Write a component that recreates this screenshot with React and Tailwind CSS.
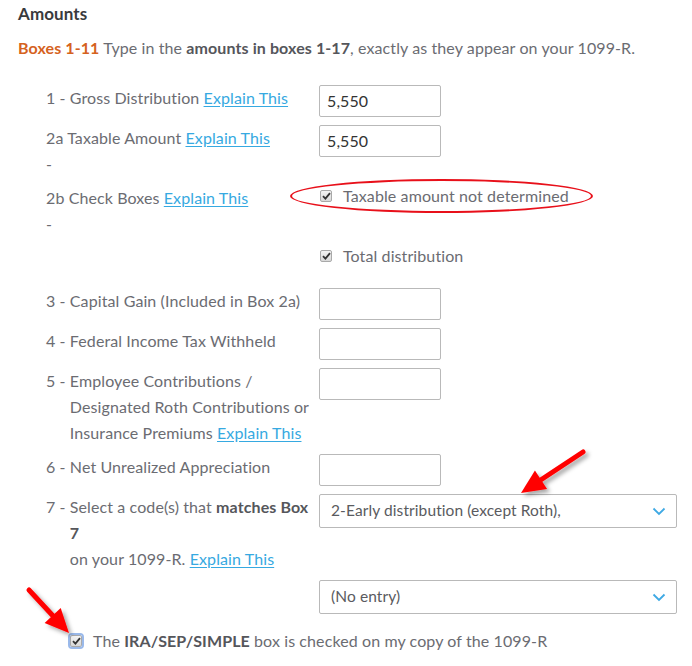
import React from "react";

const font = { fontFamily: "Lato, 'Noto Sans', sans-serif" };

function Link({ children }) {
  return <span className="text-[#36a9e1] underline underline-offset-2">{children}</span>;
}

function Check({ focus }) {
  return (
    <span
      className={
        "inline-flex w-[12px] h-[12px] items-center justify-center rounded-[2px] border border-[#a9a9a9] bg-gradient-to-b from-[#f4f4f4] to-[#d8d8d8] shrink-0 " +
        (focus ? "outline outline-2 outline-[#9ab9ea]" : "")
      }
    >
      <svg width="9" height="8" viewBox="0 0 9 8">
        <path d="M1 4.2 L3.4 6.6 L8 1.2" fill="none" stroke="#333" strokeWidth="1.8" />
      </svg>
    </span>
  );
}

function Input({ value }) {
  return (
    <div className="w-[122px] h-[32px] shrink-0 border border-[#b9b9b9] rounded-[2px] bg-white flex items-center px-[7px] text-[16px] text-[#333]">
      {value}
    </div>
  );
}

function Select({ value }) {
  return (
    <div className="w-[358px] h-[34px] shrink-0 border border-[#b9b9b9] rounded-[2px] bg-white flex items-center justify-between pl-[11px] pr-[10px] text-[15.5px] text-[#5a5b60]">
      <span>{value}</span>
      <svg width="14" height="9" viewBox="0 0 14 9">
        <path d="M1.5 1.5 L7 7 L12.5 1.5" fill="none" stroke="#3ea9e4" strokeWidth="1.8" />
      </svg>
    </div>
  );
}

function Label({ num, children }) {
  return (
    <div className="w-[319px] shrink-0 pl-[46px] flex leading-[26px] whitespace-nowrap">
      <span className="whitespace-pre shrink-0">{num}</span>
      <span>{children}</span>
    </div>
  );
}

function Arrow({ x1, y1, x2, y2 }) {
  const ang = Math.atan2(y2 - y1, x2 - x1);
  const len = 24;
  const w = 11;
  const bx = x2 - len * Math.cos(ang);
  const by = y2 - len * Math.sin(ang);
  const px = -Math.sin(ang) * w;
  const py = Math.cos(ang) * w;
  return (
    <g>
      <line x1={x1} y1={y1} x2={bx} y2={by} stroke="#ff0000" strokeWidth="5" strokeLinecap="round" />
      <polygon points={`${x2},${y2} ${bx + px},${by + py} ${bx - px},${by - py}`} fill="#ff0000" />
    </g>
  );
}

export default function App() {
  return (
    <div
      className="relative w-[692px] h-[666px] bg-white overflow-hidden text-[16px] tracking-[0.1px] text-[#6b6c72]"
      style={font}
    >
      <div className="pl-[18px] pt-[2px]">
        <div className="text-[17px] font-bold text-[#393a3d] leading-[24px]">Amounts</div>
        <div className="mt-[9px] leading-[26px] whitespace-nowrap">
          <span className="text-[#d5621e] font-bold">Boxes 1-11</span> Type in the{" "}
          <span className="font-bold text-[#55565b]">amounts in boxes 1-17</span>, exactly as they appear on your 1099-R.
        </div>
      </div>

      <div className="mt-[24px] flex flex-col">
        <div className="flex">
          <Label num="1 - ">
            Gross Distribution <Link>Explain This</Link>
          </Label>
          <Input value="5,550" />
        </div>

        <div className="flex mt-[8px]">
          <div className="w-[319px] shrink-0 pl-[46px] leading-[26px] whitespace-nowrap">
            <div>
              2a Taxable Amount <Link>Explain This</Link>
            </div>
            <div>-</div>
          </div>
          <Input value="5,550" />
        </div>

        <div className="flex mt-[8px]">
          <div className="w-[319px] shrink-0 pl-[46px] leading-[26px] whitespace-nowrap">
            <div>
              2b Check Boxes <Link>Explain This</Link>
            </div>
            <div>-</div>
          </div>
          <div className="flex flex-col">
            <div className="relative flex items-center gap-[11px] h-[22px] pl-[1px] whitespace-nowrap">
              <Check />
              <span>Taxable amount not determined</span>
              <div className="absolute left-[-29px] top-[-6px] w-[303px] h-[34px] border-2 border-[#e8101a] rounded-[50%]" />
            </div>
            <div className="flex items-center gap-[11px] h-[26px] mt-[36px] pl-[1px]">
              <Check />
              <span>Total distribution</span>
            </div>
          </div>
        </div>

        <div className="flex mt-[19px]">
          <Label num="3 - ">Capital Gain (Included in Box 2a)</Label>
          <Input value="" />
        </div>

        <div className="flex mt-[8px]">
          <Label num="4 - ">Federal Income Tax Withheld</Label>
          <Input value="" />
        </div>

        <div className="flex mt-[8px]">
          <Label num="5 - ">
            Employee Contributions /<br />
            Designated Roth Contributions or
            <br />
            Insurance Premiums <Link>Explain This</Link>
          </Label>
          <Input value="" />
        </div>

        <div className="flex mt-[8px]">
          <Label num="6 - ">Net Unrealized Appreciation</Label>
          <Input value="" />
        </div>

        <div className="flex mt-[8px]">
          <Label num="7 - ">
            Select a code(s) that <b className="text-[#55565b]">matches Box</b>
            <br />
            <b className="text-[#55565b]">7</b>
            <br />
            on your 1099-R. <Link>Explain This</Link>
          </Label>
          <Select value="2-Early distribution (except Roth)," />
        </div>

        <div className="flex mt-[8px]">
          <div className="w-[319px] shrink-0" />
          <Select value="(No entry)" />
        </div>

        <div className="flex items-center gap-[11px] pl-[70px] mt-[14px] h-[26px] whitespace-nowrap">
          <Check focus />
          <span>
            The <b className="text-[#55565b]">IRA/SEP/SIMPLE</b> box is checked on my copy of the 1099-R
          </span>
        </div>
      </div>

      <svg className="absolute left-0 top-0 pointer-events-none" width="692" height="666">
        <defs>
          <filter id="sh" x="-20%" y="-20%" width="140%" height="140%">
            <feDropShadow dx="3" dy="3" stdDeviation="2" floodColor="#000" floodOpacity="0.35" />
          </filter>
        </defs>
        <g filter="url(#sh)">
          <Arrow x1={583} y1={452} x2={521} y2={493} />
          <Arrow x1={29} y1={590} x2={69} y2={633} />
        </g>
      </svg>
    </div>
  );
}
